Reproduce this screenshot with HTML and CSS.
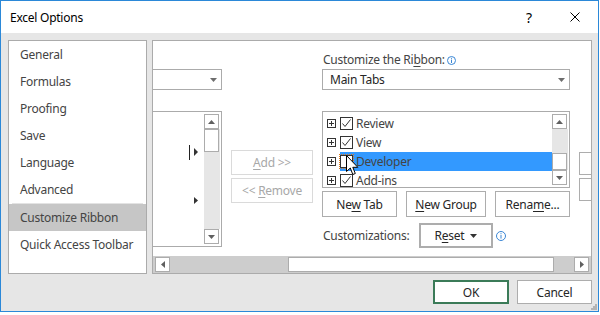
FILE: index.html
```html
<!DOCTYPE html>
<html lang="en">
<head>
<meta charset="utf-8">
<title>Excel Options</title>
<link rel="stylesheet" href="styles.css">
</head>
<body>
<div class="window">
  <header class="titlebar">
    <span class="title">Excel Options</span>
    <span class="caption-btn help">?</span>
    <span class="caption-btn close"><svg width="10" height="10" viewBox="0 0 10 10"><path d="M0.5 0.5L9.5 9.5M9.5 0.5L0.5 9.5" stroke="#000" stroke-width="1" fill="none"/></svg></span>
  </header>
  <main class="client">
    <div class="content">
      <ul class="nav">
        <li>General</li>
        <li>Formulas</li>
        <li>Proofing</li>
        <li>Save</li>
        <li>Language</li>
        <li>Advanced</li>
        <li class="sep"></li>
        <li class="selected">Customize Ribbon</li>
        <li>Quick Access Toolbar</li>
      </ul>
      <section class="panel">
        <div class="viewport">
          <div class="scroller">
            <div class="col">
              <div class="label"></div>
              <div class="combo"><span class="combo-text"></span><svg class="caret" width="7" height="4" viewBox="0 0 7 4"><path d="M0 0H7L3.5 4Z" fill="#6d6d6d"/></svg></div>
              <div class="listbox cmd-list">
                <ul class="items">
                  <li></li>
                  <li></li>
                  <li><span class="split"></span><svg class="more" width="4" height="8" viewBox="0 0 4 8"><path d="M0 0L4 4L0 8Z" fill="#333"/></svg></li>
                  <li></li>
                  <li></li>
                  <li><svg class="more" width="4" height="7" viewBox="0 0 4 7"><path d="M0 0L4 3.5L0 7Z" fill="#333"/></svg></li>
                  <li></li>
                  <li></li>
                </ul>
                <div class="vscroll">
                  <div class="sb-btn"><svg width="7" height="4" viewBox="0 0 7 4"><path d="M0 4H7L3.5 0Z" fill="#606060"/></svg></div>
                  <div class="sb-track"><div class="sb-thumb thumb-top"></div></div>
                  <div class="sb-btn"><svg width="7" height="4" viewBox="0 0 7 4"><path d="M0 0H7L3.5 4Z" fill="#606060"/></svg></div>
                </div>
              </div>
            </div>
            <div class="col col-mid">
              <button class="btn disabled add"><span><u>A</u>dd &gt;&gt;</span></button>
              <button class="btn disabled remove"><span>&lt;&lt; <u>R</u>emove</span></button>
            </div>
            <div class="col">
              <div class="label"><span>Customize the Ri<u>b</u>bon:</span><svg class="info" width="9" height="9" viewBox="0 0 9 9"><circle cx="4.5" cy="4.5" r="4" fill="none" stroke="#3a86d4" stroke-width="1"/><path d="M4.5 3.6V7" stroke="#3a86d4" stroke-width="1"/><rect x="4" y="1.8" width="1" height="1" fill="#3a86d4"/></svg></div>
              <div class="combo"><span class="combo-text">Main Tabs</span><svg class="caret" width="7" height="4" viewBox="0 0 7 4"><path d="M0 0H7L3.5 4Z" fill="#6d6d6d"/></svg></div>
              <div class="listbox tree">
                <ul class="items">
                  <li class="node"><span class="expander"></span><span class="item"><span class="check"><svg width="11" height="11" viewBox="0 0 11 11"><path d="M1.5 5.5L4 8.5L9.5 1.5" stroke="#333" stroke-width="1" fill="none"/></svg></span><span>Review</span></span></li>
                  <li class="node"><span class="expander"></span><span class="item"><span class="check"><svg width="11" height="11" viewBox="0 0 11 11"><path d="M1.5 5.5L4 8.5L9.5 1.5" stroke="#333" stroke-width="1" fill="none"/></svg></span><span>View</span></span></li>
                  <li class="node"><span class="expander"></span><span class="item selected"><span class="check focus"></span><span>Developer</span></span></li>
                  <li class="node"><span class="expander"></span><span class="item"><span class="check"><svg width="11" height="11" viewBox="0 0 11 11"><path d="M1.5 5.5L4 8.5L9.5 1.5" stroke="#333" stroke-width="1" fill="none"/></svg></span><span>Add-ins</span></span></li>
                </ul>
                <div class="vscroll">
                  <div class="sb-btn"><svg width="7" height="4" viewBox="0 0 7 4"><path d="M0 4H7L3.5 0Z" fill="#606060"/></svg></div>
                  <div class="sb-track"><div class="sb-thumb thumb-bottom"></div></div>
                  <div class="sb-btn"><svg width="7" height="4" viewBox="0 0 7 4"><path d="M0 0H7L3.5 4Z" fill="#606060"/></svg></div>
                </div>
                <svg class="cursor" width="13" height="21" viewBox="0 0 13 21"><path d="M0.5 0.5V16.5L4.3 13L6.8 19.5L9.3 18.5L6.8 12.3H11.8Z" fill="#fff" stroke="#000" stroke-width="1" stroke-linejoin="miter"/></svg>
              </div>
              <div class="btn-row">
                <button class="btn w75"><span>Ne<u>w</u> Tab</span></button>
                <button class="btn w80"><span><u>N</u>ew Group</span></button>
                <button class="btn w75"><span>Rena<u>m</u>e...</span></button>
              </div>
              <div class="cust-row">
                <span class="cust-label">Customizations:</span>
                <button class="btn reset"><span>R<u>e</u>set</span><svg class="reset-caret" width="7" height="4" viewBox="0 0 7 4"><path d="M0 0H7L3.5 4Z" fill="#333"/></svg></button>
                <svg class="info info-lg" width="10" height="10" viewBox="0 0 10 10"><circle cx="5" cy="5" r="4.5" fill="none" stroke="#3a86d4" stroke-width="1"/><path d="M5 4V7.6" stroke="#3a86d4" stroke-width="1"/><rect x="4.5" y="2.2" width="1" height="1" fill="#3a86d4"/></svg>
              </div>
            </div>
            <div class="col col-far">
              <button class="btn mini"></button>
              <button class="btn mini"></button>
            </div>
          </div>
        </div>
        <div class="hscroll">
          <div class="sb-btn"><svg width="4" height="7" viewBox="0 0 4 7"><path d="M4 0V7L0 3.5Z" fill="#606060"/></svg></div>
          <div class="sb-track"><div class="sb-thumb thumb-h"></div></div>
          <div class="sb-btn"><svg width="4" height="7" viewBox="0 0 4 7"><path d="M0 0V7L4 3.5Z" fill="#606060"/></svg></div>
        </div>
      </section>
    </div>
    <footer class="footer">
      <button class="btn ok"><span>OK</span></button>
      <button class="btn cancel"><span>Cancel</span></button>
    </footer>
  </main>
  <svg class="grip" width="6" height="6" viewBox="0 0 6 6"><g fill="#b4b4b4"><rect x="4" y="0" width="2" height="2"/><rect x="2" y="2" width="2" height="2"/><rect x="4" y="2" width="2" height="2"/><rect x="0" y="4" width="2" height="2"/><rect x="2" y="4" width="2" height="2"/><rect x="4" y="4" width="2" height="2"/></g></svg>
</div>
</body>
</html>
```

FILE: styles.css
```css
* { box-sizing: border-box; margin: 0; padding: 0; }
html, body { width: 600px; height: 315px; background: #ffffff; overflow: hidden; }
body { font-family: "Noto Sans", "Open Sans", sans-serif; font-size: 12px; letter-spacing: -0.25px; color: #444444; }
ul { list-style: none; }
button { font: inherit; letter-spacing: inherit; }

.window {
  position: relative;
  width: 599px;
  height: 312px;
  border: 1px solid #2b88d8;
  background: #e6e6e6;
  display: flex;
  flex-direction: column;
}

.titlebar { flex: none; height: 32px; background: #fff; display: flex; align-items: center; }
.title { flex: 1; padding-left: 9px; color: #000; }
.caption-btn { width: 46px; height: 32px; display: flex; align-items: center; justify-content: center; color: #000; }
.help { font-size: 14px; padding-top: 1px; }
.close svg { display: block; }

.client { flex: 1; display: flex; flex-direction: column; padding: 7px 6px 0 7px; }
.content { display: flex; height: 234px; }

/* navigation */
.nav { width: 139px; background: #fff; border: 1px solid #ababab; }
.nav li { height: 27px; line-height: 27px; padding-left: 11px; white-space: nowrap; }
.nav li.sep { height: 1px; margin: 0 3px; background: #e3e3e3; }
.nav li.selected { background: #c6c6c6; }

/* main panel */
.panel { width: 440px; margin-left: 5px; background: #fff; border: 1px solid #ababab; display: flex; flex-direction: column; }
.viewport { flex: 1; overflow: hidden; }
.scroller { display: flex; gap: 9px; margin-left: -179px; padding-top: 11px; }
.col { width: 248px; flex: none; display: flex; flex-direction: column; }
.col-mid { width: 82px; }
.col-far { width: 30px; }

.label { height: 16px; line-height: 16px; padding-left: 1px; white-space: nowrap; display: flex; align-items: center; }
.label u { text-underline-offset: 2px; }
.info { margin-left: 2px; flex: none; }

.combo { margin-top: 1px; height: 21px; border: 1px solid #ababab; background: #fff; display: flex; align-items: center; justify-content: space-between; padding: 0 4px 0 7px; color: #262626; white-space: nowrap; }
.combo-text { overflow: hidden; }
.caret { flex: none; }

.listbox { position: relative; margin-top: 21px; border: 1px solid #ababab; background: #fff; display: flex; overflow: hidden; }
.cmd-list { height: 136px; }
.tree { height: 77px; }
.items { flex: 1; min-width: 0; }

.cmd-list li { height: 16px; display: flex; align-items: center; justify-content: flex-end; padding-right: 6px; }
.split { width: 1px; height: 15px; background: #222; margin-right: 4px; }
.more { flex: none; }

.tree .items { padding-top: 2px; }
.node { height: 19px; display: flex; align-items: center; padding-left: 4px; white-space: nowrap; }
.expander { position: relative; flex: none; width: 9px; height: 9px; border: 1px solid #333; margin-right: 4px; }
.expander::before { content: ""; position: absolute; left: 1px; top: 3px; width: 5px; height: 1px; background: #333; }
.expander::after { content: ""; position: absolute; left: 3px; top: 1px; width: 1px; height: 5px; background: #333; }
.item { flex: 1; height: 19px; display: flex; align-items: center; }
.item.selected { background: #3399ff; }
.check { flex: none; width: 13px; height: 13px; border: 1px solid #333; background: #fff; margin-right: 3px; display: flex; align-items: center; justify-content: center; }
.check svg { display: block; }
.check.focus { outline: 1px dotted #e07a1a; outline-offset: 0; background: #fff; }
.cursor { position: absolute; left: 23px; top: 43px; }

.vscroll { flex: none; width: 17px; padding: 2px 1px 2px 0; display: flex; flex-direction: column; }
.sb-btn { flex: none; width: 15px; height: 15px; border: 1px solid #acacac; background: #fff; display: flex; align-items: center; justify-content: center; }
.sb-btn svg { display: block; }
.sb-track { flex: 1; background: #e6e6e6; display: flex; flex-direction: column; }
.sb-thumb { width: 15px; height: 23px; border: 1px solid #acacac; background: #fff; }
.thumb-top { margin-top: 0; }
.thumb-bottom { margin-top: auto; height: 17px; }

.hscroll { flex: none; height: 17px; display: flex; padding: 1px 2px; background: #cdcdcd; }
.hscroll .sb-track { flex-direction: row; background: #cdcdcd; }
.thumb-h { width: 266px; height: 15px; margin-left: 118px; }

/* buttons */
.btn { display: flex; align-items: center; justify-content: center; border: 1px solid #adadad; background: #fff; color: #262626; white-space: nowrap; }
.btn u { text-underline-offset: 2px; }
.btn.disabled { border-color: #dadada; color: #a8a8a8; }
.add { margin-top: 98px; height: 25px; }
.remove { margin-top: 3px; height: 25px; }

.btn-row { margin-top: 3px; display: flex; justify-content: space-between; }
.btn-row .btn { height: 26px; }
.w75 { width: 75px; }
.w80 { width: 80px; }

.cust-row { margin-top: 6px; display: flex; align-items: center; }
.cust-label { width: 97px; padding-left: 1px; white-space: nowrap; }
.reset { width: 74px; height: 25px; border: 2px solid #adadad; }
.reset-caret { margin-left: 6px; }
.info-lg { margin-left: 3px; }

.mini { width: 30px; height: 23px; }
.mini:first-child { margin-top: 100px; }
.mini + .mini { margin-top: 3px; }

/* footer */
.footer { margin-top: 6px; display: flex; justify-content: flex-end; gap: 8px; }
.footer .btn { height: 24px; }
.ok { width: 76px; border: 2px solid #3b7b58; }
.cancel { width: 75px; }

.grip { position: absolute; right: 1px; bottom: 1px; }
```
